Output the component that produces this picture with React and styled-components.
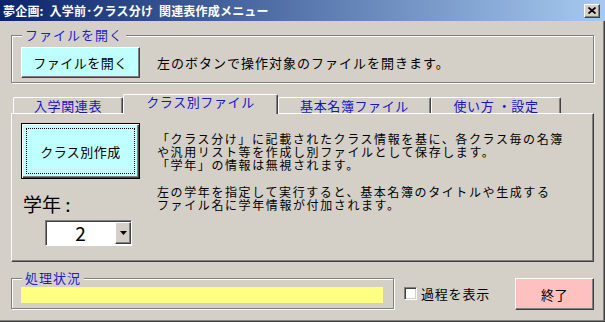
import React from "react";
import styled, { createGlobalStyle } from "styled-components";

const FONT = `"Noto Sans CJK JP", "Noto Sans", sans-serif`;

const GlobalStyle = createGlobalStyle`
  html, body {
    margin: 0;
    padding: 0;
    background: #d4d0c8;
  }
  body {
    font-family: ${FONT};
  }
`;

export default function App() {
  return (
    <>
      <GlobalStyle />
      <Window>
        <TitleBar>
          <Title>夢企画:  入学前･クラス分け  関連表作成メニュー</Title>
          <CloseButton aria-label="閉じる">
            <svg width="8" height="7" viewBox="0 0 8 7">
              <path d="M0.5 0.5 L7.5 6.5 M7.5 0.5 L0.5 6.5" stroke="#000" strokeWidth="1.7" />
            </svg>
          </CloseButton>
        </TitleBar>
        <Body>
          <GroupBox $top={14} $height={48} $pad="11px 0 0 9px">
            <Caption>ファイルを開く</Caption>
            <Row>
              <Button $bg="#c0ffff" $w={119} $h={31}>ファイルを開く</Button>
              <Note>左のボタンで操作対象のファイルを開きます。</Note>
            </Row>
          </GroupBox>

          <TabStrip>
            <Tab $w={110}>入学関連表</Tab>
            <Tab $w={155} $active>クラス別ファイル</Tab>
            <Tab $w={153}>基本名簿ファイル</Tab>
            <Tab $w={130}>使い方 ・設定</Tab>
          </TabStrip>
          <TabPanel>
            <LeftColumn>
              <DefaultButton>クラス別作成</DefaultButton>
              <GradeLabel>学年 :</GradeLabel>
              <Combo>
                <ComboValue>2</ComboValue>
                <ComboArrow>
                  <svg width="7" height="4" viewBox="0 0 7 4">
                    <path d="M0 0 H7 L3.5 4 Z" fill="#000" />
                  </svg>
                </ComboArrow>
              </Combo>
            </LeftColumn>
            <Description>
              <Para>
                「クラス分け」に記載されたクラス情報を基に、各クラス毎の名簿
                <br />
                や汎用リスト等を作成し別ファイルとして保存します。
                <br />
                「学年」の情報は無視されます。
              </Para>
              <Para $gap>
                左の学年を指定して実行すると、基本名簿のタイトルや生成する
                <br />
                ファイル名に学年情報が付加されます。
              </Para>
            </Description>
          </TabPanel>

          <Footer>
            <GroupBox $top={0} $width={383} $height={31} $pad="8px 0 0 9px">
              <Caption>処理状況</Caption>
              <StatusBar />
            </GroupBox>
            <CheckRow>
              <CheckBox />
              <span>過程を表示</span>
            </CheckRow>
            <Button $bg="#ffc0c0" $w={79} $h={32} $push>終了</Button>
          </Footer>
        </Body>
      </Window>
    </>
  );
}

const Window = styled.div`
  width: 605px;
  height: 322px;
  box-sizing: border-box;
  background: #d4d0c8;
  box-shadow: inset -1px -1px 0 #404040, inset -2px -2px 0 #808080;
  font-family: ${FONT};
  font-size: 13px;
  color: #000;
  overflow: hidden;
`;

const TitleBar = styled.div`
  height: 21px;
  display: flex;
  align-items: center;
  padding: 0 5px 0 3px;
  background: linear-gradient(to right, #0a246a, #a6caf0);
`;

const Title = styled.span`
  flex: 1;
  color: #fff;
  font-weight: bold;
  font-size: 12px;
  letter-spacing: 0.2px;
  white-space: pre;
`;

const CloseButton = styled.button`
  width: 16px;
  height: 14px;
  padding: 0;
  display: flex;
  align-items: center;
  justify-content: center;
  background: #d4d0c8;
  border: 1px solid;
  border-color: #fff #404040 #404040 #fff;
  box-shadow: inset -1px -1px 0 #808080;
`;

const Body = styled.div`
  padding: 0 11px;
`;

const GroupBox = styled.div`
  position: relative;
  box-sizing: border-box;
  width: ${(p) => (p.$width ? `${p.$width}px` : "auto")};
  height: ${(p) => p.$height}px;
  margin-top: ${(p) => p.$top}px;
  padding: ${(p) => p.$pad};
  border: 1px solid #808080;
  box-shadow: inset 1px 1px 0 #fff, 1px 1px 0 #fff;
`;

const Caption = styled.span`
  position: absolute;
  top: -8px;
  left: 10px;
  padding: 0 3px;
  background: #d4d0c8;
  color: #1c1cd0;
  font-size: 13px;
  line-height: 14px;
  letter-spacing: 1px;
`;

const Row = styled.div`
  display: flex;
  align-items: center;
`;

const Button = styled.button`
  box-sizing: border-box;
  width: ${(p) => p.$w}px;
  height: ${(p) => p.$h}px;
  margin-left: ${(p) => (p.$push ? "auto" : "0")};
  padding: 0;
  background: ${(p) => p.$bg};
  border: 1px solid;
  border-color: #fff #404040 #404040 #fff;
  box-shadow: inset -1px -1px 0 #808080;
  font-family: ${FONT};
  font-size: 13px;
  letter-spacing: 0.5px;
  color: #000;
`;

const Note = styled.span`
  margin-left: 17px;
  letter-spacing: 1px;
  white-space: nowrap;
`;

const TabStrip = styled.div`
  position: relative;
  z-index: 2;
  display: flex;
  align-items: flex-end;
  height: 19px;
  margin-top: 11px;
  padding-left: 2px;
`;

const Tab = styled.div`
  box-sizing: border-box;
  width: ${(p) => p.$w}px;
  height: ${(p) => (p.$active ? 20 : 16)}px;
  margin-bottom: ${(p) => (p.$active ? -1 : 0)}px;
  padding-top: ${(p) => (p.$active ? 0 : 1)}px;
  background: #d4d0c8;
  border-top: 1px solid #fff;
  border-left: 1px solid #fff;
  border-right: 1px solid #404040;
  border-radius: 2px 2px 0 0;
  box-shadow: inset -1px 0 0 #808080;
  color: #1414c8;
  font-size: 13px;
  line-height: 14px;
  letter-spacing: 0.6px;
  text-align: center;
  white-space: pre;
`;

const TabPanel = styled.div`
  position: relative;
  z-index: 1;
  box-sizing: border-box;
  height: 149px;
  display: flex;
  padding: 9px 0 0 9px;
  border-top: 1px solid #fff;
  border-left: 1px solid #fff;
  border-right: 1px solid #404040;
  border-bottom: 1px solid #404040;
  box-shadow: inset -1px -1px 0 #808080;
`;

const LeftColumn = styled.div`
  display: flex;
  flex-direction: column;
  width: 119px;
`;

const DefaultButton = styled.button`
  position: relative;
  box-sizing: border-box;
  width: 119px;
  height: 56px;
  padding: 0;
  background: #c0ffff;
  border: 1px solid #000;
  box-shadow: inset 1px 1px 0 #fff, inset -1px -1px 0 #404040,
    inset -2px -2px 0 #808080;
  font-family: ${FONT};
  font-size: 13px;
  letter-spacing: 0.5px;
  color: #000;

  &::after {
    content: "";
    position: absolute;
    inset: 4px;
    border: 1px dotted #000;
  }
`;

const GradeLabel = styled.div`
  margin: 14px 0 0 2px;
  font-size: 19px;
  line-height: 22px;
  white-space: pre;
`;

const Combo = styled.div`
  box-sizing: border-box;
  display: flex;
  width: 87px;
  height: 26px;
  margin: 5px 0 0 24px;
  background: #fff;
  border: 1px solid;
  border-color: #808080 #fff #fff #808080;
  box-shadow: inset 1px 1px 0 #404040;
`;

const ComboValue = styled.div`
  flex: 1;
  text-align: center;
  font-size: 19px;
  line-height: 24px;
`;

const ComboArrow = styled.div`
  box-sizing: border-box;
  width: 16px;
  margin: 1px 0 1px;
  display: flex;
  align-items: center;
  justify-content: center;
  background: #d4d0c8;
  border: 1px solid;
  border-color: #fff #404040 #404040 #fff;
  box-shadow: inset -1px -1px 0 #808080;
`;

const Description = styled.div`
  margin: 9px 0 0 17px;
`;

const Para = styled.p`
  margin: ${(p) => (p.$gap ? "14px" : "0")} 0 0;
  font-size: 12px;
  line-height: 13px;
  letter-spacing: 1.6px;
  white-space: nowrap;
`;

const Footer = styled.div`
  display: flex;
  align-items: flex-start;
  margin-top: 16px;
`;

const StatusBar = styled.div`
  width: 362px;
  height: 16px;
  background: #ffff80;
`;

const CheckRow = styled.label`
  display: flex;
  align-items: center;
  gap: 4px;
  margin: 9px 0 0 10px;
  font-size: 13px;
  line-height: 13px;
  letter-spacing: 0.8px;
`;

const CheckBox = styled.span`
  box-sizing: border-box;
  width: 13px;
  height: 13px;
  background: #fff;
  border: 1px solid;
  border-color: #808080 #fff #fff #808080;
  box-shadow: inset 1px 1px 0 #404040, inset -1px -1px 0 #d4d0c8;
`;
